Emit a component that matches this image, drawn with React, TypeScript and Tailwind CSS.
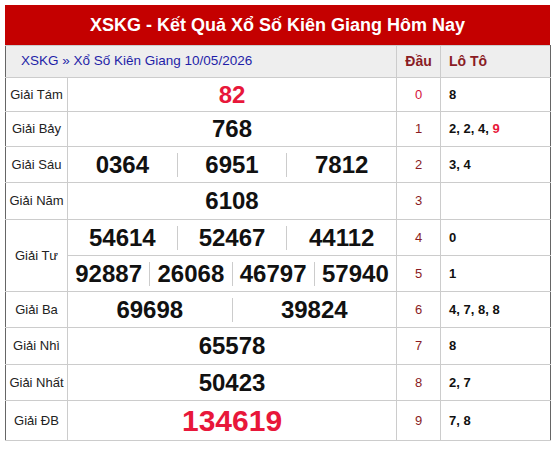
import React from 'react';

type Row = {
  label: string;
  nums: string[][];
  red?: boolean;
  big?: boolean;
  h: string;
};

const rows: Row[] = [
  { label: 'Giải Tám', nums: [['82']], red: true, h: 'h-[34px]' },
  { label: 'Giải Bảy', nums: [['768']], h: 'h-[35px]' },
  { label: 'Giải Sáu', nums: [['0364', '6951', '7812']], h: 'h-[36px]' },
  { label: 'Giải Năm', nums: [['6108']], h: 'h-[37px]' },
  {
    label: 'Giải Tư',
    nums: [
      ['54614', '52467', '44112'],
      ['92887', '26068', '46797', '57940'],
    ],
    h: 'h-[36px]',
  },
  { label: 'Giải Ba', nums: [['69698', '39824']], h: 'h-[36px]' },
  { label: 'Giải Nhì', nums: [['65578']], h: 'h-[37px]' },
  { label: 'Giải Nhất', nums: [['50423']], h: 'h-[36px]' },
  { label: 'Giải ĐB', nums: [['134619']], red: true, big: true, h: 'h-[40px]' },
];

// lô tô per đầu, redTail = the đặc biệt tail
const loto: { dau: string; vals: string[]; redTail?: string }[] = [
  { dau: '0', vals: ['8'] },
  { dau: '1', vals: ['2', '2', '4'], redTail: '9' },
  { dau: '2', vals: ['3', '4'] },
  { dau: '3', vals: [] },
  { dau: '4', vals: ['0'] },
  { dau: '5', vals: ['1'] },
  { dau: '6', vals: ['4', '7', '8', '8'] },
  { dau: '7', vals: ['8'] },
  { dau: '8', vals: ['2', '7'] },
  { dau: '9', vals: ['7', '8'] },
];

function DauCells({ i }: { i: number }) {
  const l = loto[i];
  return (
    <>
      <td className={`border border-[#cccccc] text-center text-[13px] ${i === 0 ? 'text-[#d3113a]' : 'text-[#8a1c24]'}`}>
        {l.dau}
      </td>
      <td className="border border-[#cccccc] border-r-[#666666] pl-[8px] text-[13px] font-bold text-[#111111]">
        {l.vals.join(', ')}
        {l.redTail && (
          <>
            {', '}
            <span className="text-[#e8173a]">{l.redTail}</span>
          </>
        )}
      </td>
    </>
  );
}

function NumLine({ nums, red, big }: { nums: string[]; red?: boolean; big?: boolean }) {
  return (
    <div className="flex h-full w-full">
      {nums.map((n, k) => (
        <div
          key={k}
          className={`flex flex-1 items-center justify-center ${k > 0 ? 'border-l border-[#cccccc]' : ''} ${
            red ? 'text-[#e8173a]' : 'text-[#111111]'
          } ${big ? 'text-[30px]' : 'text-[24px]'} font-bold leading-none`}
        >
          {n}
        </div>
      ))}
    </div>
  );
}

export default function App() {
  let dauIdx = 0;
  const body: React.ReactNode[] = [];
  rows.forEach((r, ri) => {
    r.nums.forEach((line, li) => {
      const di = dauIdx++;
      body.push(
        <tr key={`${ri}-${li}`} className={r.h}>
          {li === 0 && (
            <td
              rowSpan={r.nums.length}
              className="border border-[#cccccc] border-l-[#666666] text-center text-[13px] text-[#222222]"
            >
              {r.label}
            </td>
          )}
          <td className="border border-[#cccccc] p-0">
            <NumLine nums={line} red={r.red} big={r.big} />
          </td>
          <DauCells i={di} />
        </tr>
      );
    });
  });

  return (
    <div className="min-h-[450px] bg-white p-[5px] font-['Liberation_Sans',Arial,sans-serif]">
      <div className="w-[545px]">
        <div className="flex h-[40px] items-center justify-center bg-[#c40000] text-[18px] font-bold text-white">
          XSKG - Kết Quả Xổ Số Kiên Giang Hôm Nay
        </div>
        <table className="w-full table-fixed border-collapse">
          <colgroup>
            <col className="w-[62px]" />
            <col className="w-[329px]" />
            <col className="w-[44px]" />
            <col className="w-[110px]" />
          </colgroup>
          <tbody>
            <tr className="h-[32px] bg-[#eeeeee]">
              <td colSpan={2} className="border border-[#cccccc] border-l-[#666666] pl-[15px] text-[13.5px] text-[#1f1fa8]">
                XSKG » Xổ Số Kiên Giang 10/05/2026
              </td>
              <td className="border border-[#cccccc] text-center text-[14px] font-bold text-[#8a1c24]">Đầu</td>
              <td className="border border-[#cccccc] border-r-[#666666] pl-[8px] text-[14px] font-bold text-[#8a1c24]">
                Lô Tô
              </td>
            </tr>
            {body}
          </tbody>
        </table>
      </div>
    </div>
  );
}
